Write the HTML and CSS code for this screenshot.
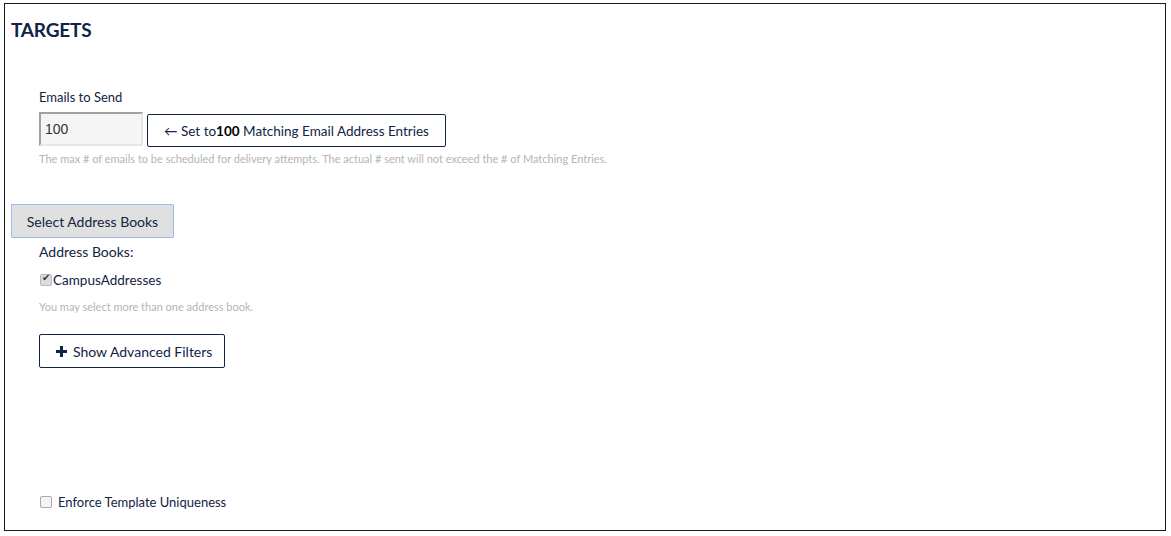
FILE: index.html
```html
<!DOCTYPE html>
<html lang="en">
<head>
  <meta charset="UTF-8">
  <meta name="viewport" content="width=device-width,initial-scale=1.0">
  <title>Targets</title>
  <link rel="stylesheet" href="styles.css">
</head>
<body>
  <section class="panel">
    <h2 class="panel-title">TARGETS</h2>

    <div class="field">
      <label class="field-label" for="emails">Emails to Send</label>
      <div class="send-row">
        <input id="emails" class="count-input" type="text" value="100">
        <button class="btn btn-outline set-btn">&larr; Set to<b>100</b> Matching Email Address Entries</button>
      </div>
      <p class="help">The max # of emails to be scheduled for delivery attempts. The actual # sent will not exceed the # of Matching Entries.</p>
    </div>

    <button class="btn btn-grey select-btn">Select Address Books</button>

    <div class="field books">
      <div class="books-label">Address Books:</div>
      <label class="check">
        <input class="check-box checked" type="checkbox" checked>
        <span>CampusAddresses</span>
      </label>
      <p class="help">You may select more than one address book.</p>
      <button class="btn btn-outline filters-btn">
        <svg class="plus" width="11" height="11" viewBox="0 0 11 11"><path d="M4 0h3v4h4v3H7v4H4V7H0V4h4z" fill="#0f2447"/></svg>
        <span>Show Advanced Filters</span>
      </button>
    </div>

    <label class="check unique">
      <input class="check-box" type="checkbox">
      <span>Enforce Template Uniqueness</span>
    </label>
  </section>
</body>
</html>
```
FILE: styles.css
```css
body {
  margin: 0;
  font-family: Lato, "Open Sans", sans-serif;
  color: #12233f;
  background: #fff;
}

.panel {
  box-sizing: border-box;
  width: 1162px;
  height: 528px;
  margin: 3px 0 0 4px;
  border: 1px solid #1b1b1b;
  padding: 14px 6px 0 6px;
  display: flex;
  flex-direction: column;
}

.panel-title {
  margin: 0;
  font-size: 19px;
  line-height: 24px;
  font-weight: 700;
  color: #0f2447;
  letter-spacing: -0.2px;
}

.field {
  padding-left: 28px;
}

.field-label {
  display: block;
  margin-top: 46px;
  font-size: 13px;
  line-height: 18px;
}

.send-row {
  display: flex;
  align-items: flex-start;
  gap: 4px;
  margin-top: 6px;
}

.count-input {
  box-sizing: border-box;
  width: 104px;
  height: 34px;
  padding: 0 4px;
  font-family: "Liberation Sans", Arial, sans-serif;
  font-size: 14px;
  color: #333;
  background: #f5f5f5;
  border: 2px solid #e6e6e6;
  border-top-color: #a0a0a0;
  border-left-color: #a0a0a0;
}

.btn {
  box-sizing: border-box;
  font-family: Lato, "Open Sans", sans-serif;
  font-size: 13px;
  color: #0f2447;
  cursor: pointer;
  white-space: nowrap;
}

.btn-outline {
  background: #fff;
  border: 1px solid #0f2447;
  border-radius: 2px;
}

.set-btn {
  width: 299px;
  height: 33px;
  margin-top: 2px;
  padding: 0;
  font-size: 13.5px;
}

.set-btn b {
  color: #000;
}

.help {
  margin: 5px 0 0;
  font-size: 11px;
  line-height: 14px;
  color: #b4b4b8;
}

.select-btn {
  align-self: flex-start;
  width: 163px;
  height: 34px;
  margin-top: 38px;
  background: #e0e0e0;
  border: 1px solid #9dbaf0;
  border-radius: 1px;
  font-size: 14px;
  color: #12233f;
}

.books-label {
  margin-top: 5px;
  font-size: 14px;
  line-height: 18px;
}

.check {
  display: flex;
  align-items: center;
  font-size: 13px;
}

.check-box {
  appearance: none;
  box-sizing: border-box;
  position: relative;
  width: 12px;
  height: 12px;
  margin: 0 1px;
  background: #f4f4f4;
  border: 1px solid #a8a8a8;
  border-radius: 2px;
}

.check-box.checked {
  background: #dcdcdc;
  border-color: #b8b8b8;
}

.check-box.checked::after {
  content: "\2714";
  position: absolute;
  left: 1px;
  top: -3px;
  font-family: "DejaVu Sans", sans-serif;
  font-size: 10px;
  color: #333;
}

.books .check {
  margin-top: 11px;
  font-size: 13.5px;
}

.books .help {
  margin-top: 12px;
}

.filters-btn {
  display: flex;
  align-items: center;
  gap: 6px;
  width: 186px;
  height: 34px;
  margin-top: 20px;
  padding: 0 16px;
  font-size: 14px;
}

.plus {
  display: block;
  flex-shrink: 0;
  width: 11px;
  height: 11px;
}

.unique {
  margin-top: auto;
  margin-bottom: 20px;
  padding-left: 28px;
}

.unique span {
  margin-left: 5px;
}
```
